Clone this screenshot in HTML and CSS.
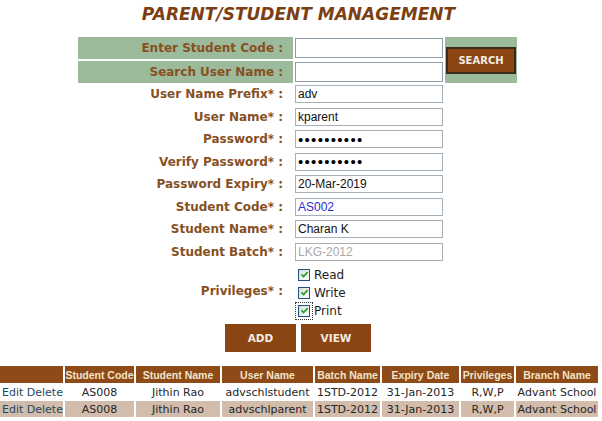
FILE: index.html
```html
<!DOCTYPE html>
<html>
<head>
<meta charset="utf-8">
<title>Parent/Student Management</title>
<link rel="stylesheet" href="styles.css">
</head>
<body>
<h1 class="title">PARENT/STUDENT MANAGEMENT</h1>

<div class="search">
  <div class="s-label">Enter Student Code :</div>
  <div class="s-input"><input class="field field-tall" type="text"></div>
  <div class="s-btn"><button class="btn btn-search" type="button">SEARCH</button></div>
  <div class="s-label">Search User Name :</div>
  <div class="s-input"><input class="field field-tall" type="text"></div>
</div>

<div class="form">
  <div class="f-label">User Name Prefix* :</div>
  <div class="f-input"><input class="field" type="text" value="adv"></div>
  <div class="f-label">User Name* :</div>
  <div class="f-input"><input class="field" type="text" value="kparent"></div>
  <div class="f-label">Password* :</div>
  <div class="f-input"><input class="field field-pass" type="password" value="kparent123"></div>
  <div class="f-label">Verify Password* :</div>
  <div class="f-input"><input class="field field-pass" type="password" value="kparent123"></div>
  <div class="f-label">Password Expiry* :</div>
  <div class="f-input"><input class="field" type="text" value="20-Mar-2019"></div>
  <div class="f-label">Student Code* :</div>
  <div class="f-input"><input class="field field-code" type="text" value="AS002"></div>
  <div class="f-label">Student Name* :</div>
  <div class="f-input"><input class="field" type="text" value="Charan K"></div>
  <div class="f-label">Student Batch* :</div>
  <div class="f-input"><input class="field field-disabled" type="text" value="LKG-2012" disabled></div>
  <div class="f-label">Privileges* :</div>
  <div class="priv">
    <div class="chk-row"><span class="chk"><svg width="9" height="9" viewBox="0 0 9 9"><path d="M1.5 4.3 L3.6 6.5 L7.6 2.2" fill="none" stroke="#21a121" stroke-width="1.7"/></svg></span>Read</div>
    <div class="chk-row"><span class="chk"><svg width="9" height="9" viewBox="0 0 9 9"><path d="M1.5 4.3 L3.6 6.5 L7.6 2.2" fill="none" stroke="#21a121" stroke-width="1.7"/></svg></span>Write</div>
    <div class="chk-row"><span class="chk chk-focus"><svg width="9" height="9" viewBox="0 0 9 9"><path d="M1.5 4.3 L3.6 6.5 L7.6 2.2" fill="none" stroke="#21a121" stroke-width="1.7"/></svg></span>Print</div>
  </div>
</div>

<div class="actions">
  <button class="btn btn-act btn-add" type="button">ADD</button>
  <button class="btn btn-act btn-view" type="button">VIEW</button>
</div>

<table class="grid">
  <thead>
    <tr>
      <th></th>
      <th>Student Code</th>
      <th>Student Name</th>
      <th>User Name</th>
      <th>Batch Name</th>
      <th>Expiry Date</th>
      <th>Privileges</th>
      <th>Branch Name</th>
    </tr>
  </thead>
  <tbody>
    <tr>
      <td class="ops">Edit Delete</td>
      <td>AS008</td>
      <td>Jithin Rao</td>
      <td>advschlstudent</td>
      <td>1STD-2012</td>
      <td>31-Jan-2013</td>
      <td>R,W,P</td>
      <td>Advant School</td>
    </tr>
    <tr class="alt">
      <td class="ops">Edit Delete</td>
      <td>AS008</td>
      <td>Jithin Rao</td>
      <td>advschlparent</td>
      <td>1STD-2012</td>
      <td>31-Jan-2013</td>
      <td>R,W,P</td>
      <td>Advant School</td>
    </tr>
  </tbody>
</table>
</body>
</html>
```

FILE: styles.css
```css
html, body {
  margin: 0;
  padding: 0;
  background: #ffffff;
}

body {
  font-family: "DejaVu Sans", Verdana, sans-serif;
  color: #1e1e1e;
  width: 602px;
  overflow: hidden;
}

.title {
  margin: 0;
  padding: 4px 5px 0 0;
  text-align: center;
  font-size: 17px;
  line-height: 20px;
  font-style: italic;
  font-weight: bold;
  color: #7b3f13;
}

/* search panel */
.search {
  display: grid;
  grid-template-columns: 215px 148px 72px;
  grid-template-rows: 22px 22px;
  column-gap: 2px;
  row-gap: 2px;
  margin: 13px 0 0 78px;
}

.s-label {
  background: #9cbb9c;
  color: #86501f;
  font-weight: bold;
  font-size: 12px;
  line-height: 22px;
  text-align: right;
  padding-right: 10px;
  white-space: nowrap;
}

.s-input {
  display: flex;
  align-items: center;
}

.s-btn {
  grid-column: 3;
  grid-row: 1 / span 2;
  background: #9cbb9c;
  display: flex;
  align-items: center;
  justify-content: center;
}

/* inputs */
.field {
  box-sizing: border-box;
  width: 148px;
  height: 18px;
  margin: 0;
  padding: 0 2px;
  border: 1px solid #a5b0b8;
  background: #ffffff;
  font-family: "Liberation Sans", Arial, sans-serif;
  font-size: 12px;
  color: #111111;
  outline: none;
}

.field-tall {
  height: 20px;
  border-color: #8f9ea8;
}

.field-pass {
  font-size: 15px;
  letter-spacing: 1.3px;
  color: #000000;
}

.field-code {
  color: #2b2bd6;
}

.field-disabled {
  color: #a8a8a8;
  -webkit-text-fill-color: #a8a8a8;
  background: #ffffff;
  opacity: 1;
}

/* main form */
.form {
  display: grid;
  grid-template-columns: 215px 148px;
  grid-template-rows: repeat(8, 22.5px) 56.5px;
  column-gap: 2px;
  margin-left: 78px;
}

.f-label {
  color: #86501f;
  font-weight: bold;
  font-size: 12px;
  text-align: right;
  padding-right: 10px;
  white-space: nowrap;
  display: flex;
  align-items: center;
  justify-content: flex-end;
}

.f-input {
  display: flex;
  align-items: center;
}

.priv {
  padding: 2.5px 0 0 3px;
}

.chk-row {
  display: flex;
  align-items: center;
  height: 18px;
  font-size: 12px;
  color: #1c1c1c;
}

.chk {
  box-sizing: border-box;
  width: 12px;
  height: 12px;
  border: 1px solid #1f5386;
  background: linear-gradient(135deg, #dcdcd4 0%, #f6f6f2 70%, #ffffff 100%);
  display: flex;
  align-items: center;
  justify-content: center;
  margin-right: 4px;
  flex: none;
}

.chk-focus {
  outline: 1px dotted #333333;
  outline-offset: 2px;
}

/* buttons */
.btn {
  box-sizing: border-box;
  margin: 0;
  padding: 0;
  font-family: "DejaVu Sans", Verdana, sans-serif;
  font-weight: bold;
  font-size: 10.5px;
  color: #f4ece2;
  background: #8b4513;
  cursor: pointer;
}

.btn-search {
  width: 70px;
  height: 27px;
  border: 2px solid #3a2c1c;
  font-size: 10px;
}

.actions {
  display: flex;
  gap: 5px;
  margin: 4.5px 0 0 225px;
}

.btn-act {
  height: 28px;
  border: none;
}

.btn-add {
  width: 71px;
}

.btn-view {
  width: 70px;
}

/* results table */
.grid {
  border-collapse: separate;
  border-spacing: 2px 1px;
  table-layout: fixed;
  width: 602px;
  margin: 13px 0 0 -2px;
  font-size: 11px;
}

.grid th {
  height: 17px;
  padding: 0;
  background: #8e4a17;
  color: #f3e4c8;
  font-family: "Liberation Sans", Arial, sans-serif;
  font-weight: bold;
  font-size: 10.5px;
  text-align: center;
  white-space: nowrap;
}

.grid td {
  height: 16px;
  padding: 0;
  text-align: center;
  white-space: nowrap;
  color: #262626;
  background: #ffffff;
}

.grid tr.alt td {
  background: #d2bcab;
}

.grid td.ops {
  text-align: left;
  padding-left: 2px;
  color: #23495e;
}

.grid th:nth-child(1) { width: 63px; }
.grid th:nth-child(2) { width: 69px; }
.grid th:nth-child(3) { width: 84px; }
.grid th:nth-child(4) { width: 91px; }
.grid th:nth-child(5) { width: 65px; }
.grid th:nth-child(6) { width: 77px; }
.grid th:nth-child(7) { width: 53px; }
.grid th:nth-child(8) { width: 82px; }
```
